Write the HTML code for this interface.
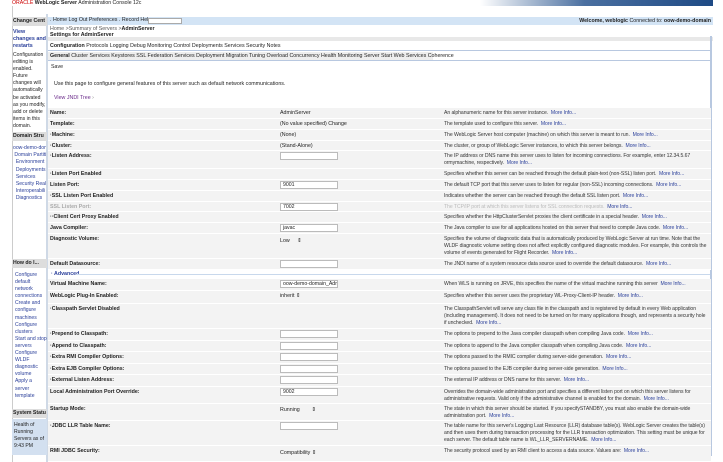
<!DOCTYPE html>
<html><head><meta charset="utf-8"><style>
*{margin:0;padding:0;box-sizing:border-box}
body{width:723px;height:462px;overflow:hidden;background:#fff;font-family:"Liberation Sans",sans-serif;font-size:5.3px;color:#222;position:relative}
.a{position:absolute}
.b{font-weight:bold}
.lk{color:#2a3f9a}
.row{position:absolute;left:48px;width:663px;background:#f3f3f3;border-bottom:1px solid #fff}
.row .l{position:absolute;left:2px;top:2px;font-weight:bold;color:#222;white-space:nowrap}
.row .v{position:absolute;left:232px;top:2px;white-space:nowrap}
.row .d{position:absolute;left:396px;top:2px;width:265px;line-height:7.2px;color:#333;font-size:5.1px;letter-spacing:-0.05px}
.in{position:absolute;left:232px;top:1px;width:58px;height:8px;border:1px solid #bbb;background:#fff;font-size:5.2px;padding-left:2px;line-height:6px;white-space:nowrap;overflow:hidden}
.side{position:absolute;left:13px;width:34px;line-height:7.1px;font-size:5.1px}
.sh{position:absolute;left:12px;width:35px;background:#ddd;font-weight:bold;font-size:5.2px;padding-left:1px;height:9px;line-height:9px;overflow:hidden;white-space:nowrap}
</style></head><body>
<div class="a" style="left:480px;top:0;width:233px;height:6px;background:linear-gradient(90deg,#fff,#4a6fa0 45%,#1e4a85)"></div>
<div class="a" style="left:12px;top:0;font-size:5.2px;line-height:6px"><span style="color:#c00">ORACLE</span> <b>WebLogic Server</b> Administration Console 12c</div>
<div class="a" style="left:12px;top:6px;width:1px;height:456px;background:#ccc"></div>
<div class="a" style="left:46px;top:14px;width:2px;height:448px;background:#cfd9e6"></div>
<div class="a" style="left:48px;top:17px;width:665px;height:8px;background:#d3e4f5"></div>
<div class="a" style="left:50px;top:17px;line-height:7px">. Home Log Out Preferences . Record Help</div>
<div class="a" style="left:148px;top:18px;width:34px;height:6px;background:#fff;border:1px solid #aaa"></div>
<div class="a" style="right:12px;top:18px;line-height:6px"><b>Welcome, weblogic</b> Connected to: <b>oow-demo-domain</b></div>
<div class="a" style="left:50px;top:26px;line-height:6px;color:#555">Home &gt;Summary of Servers &gt;<b style="color:#222">AdminServer</b></div>
<div class="a b" style="left:50px;top:32px;line-height:6px">Settings for AdminServer</div>
<div class="a" style="left:48px;top:37px;width:665px;height:4px;background:#e8e8e8"></div>
<div class="a" style="left:710px;top:36px;width:2px;height:420px;background:#b8c8e0"></div>
<div class="a" style="left:48px;top:42px;width:662px;height:9px;border-bottom:1px solid #b8c8e0;line-height:9px;padding-left:2px;white-space:nowrap"><b>Configuration</b> Protocols Logging Debug Monitoring Control Deployments Services Security Notes</div>
<div class="a" style="left:48px;top:52px;width:662px;height:9px;border-bottom:1px solid #b8c8e0;line-height:9px;padding-left:2px;white-space:nowrap;background:linear-gradient(90deg,#eee 0,#eee 385px,#fff 385px)"><b>General</b> Cluster Services Keystores SSL Federation Services Deployment Migration Tuning Overload Concurrency Health Monitoring Server Start Web Services Coherence</div>
<div class="a" style="left:51px;top:64px">Save</div>
<div class="a" style="left:54px;top:81px">Use this page to configure general features of this server such as default network communications.</div>
<div class="a" style="left:54px;top:95px;color:#6a2a8a">View JNDI Tree <span style="color:#888">›</span></div>

<div class="row" style="top:108px;height:11px"><span class="l">Name:</span><span class="v">AdminServer</span><span class="d">An alphanumeric name for this server instance. &nbsp;<span class="lk">More Info...</span></span></div>
<div class="row" style="top:119px;height:11px"><span class="l">Template:</span><span class="v">(No value specified) Change</span><span class="d">The template used to configure this server. &nbsp;<span class="lk">More Info...</span></span></div>
<div class="row" style="top:130px;height:11px"><span class="l">·Machine:</span><span class="v">(None)</span><span class="d">The WebLogic Server host computer (machine) on which this server is meant to run. &nbsp;<span class="lk">More Info...</span></span></div>
<div class="row" style="top:141px;height:10px"><span class="l">·Cluster:</span><span class="v">(Stand-Alone)</span><span class="d">The cluster, or group of WebLogic Server instances, to which this server belongs. &nbsp;<span class="lk">More Info...</span></span></div>
<div class="row" style="top:151px;height:18px"><span class="l">·Listen Address:</span><span class="in"></span><span class="d">The IP address or DNS name this server uses to listen for incoming connections. For example, enter 12.34.5.67 ormymachine, respectively. &nbsp;<span class="lk">More Info...</span></span></div>
<div class="row" style="top:169px;height:11px"><span class="l">·Listen Port Enabled</span><span class="d">Specifies whether this server can be reached through the default plain-text (non-SSL) listen port. &nbsp;<span class="lk">More Info...</span></span></div>
<div class="row" style="top:180px;height:11px"><span class="l">Listen Port:</span><span class="in">9001</span><span class="d">The default TCP port that this server uses to listen for regular (non-SSL) incoming connections. &nbsp;<span class="lk">More Info...</span></span></div>
<div class="row" style="top:191px;height:11px"><span class="l">·SSL Listen Port Enabled</span><span class="d">Indicates whether the server can be reached through the default SSL listen port. &nbsp;<span class="lk">More Info...</span></span></div>
<div class="row" style="top:202px;height:10px"><span class="l" style="color:#aaa">SSL Listen Port:</span><span class="in">7002</span><span class="d" style="color:#bbb">The TCP/IP port at which this server listens for SSL connection requests. &nbsp;<span class="lk">More Info...</span></span></div>
<div class="row" style="top:212px;height:11px"><span class="l">··Client Cert Proxy Enabled</span><span class="d">Specifies whether the HttpClusterServlet proxies the client certificate in a special header. &nbsp;<span class="lk">More Info...</span></span></div>
<div class="row" style="top:223px;height:11px"><span class="l">Java Compiler:</span><span class="in">javac</span><span class="d">The Java compiler to use for all applications hosted on this server that need to compile Java code. &nbsp;<span class="lk">More Info...</span></span></div>
<div class="row" style="top:234px;height:25px"><span class="l">Diagnostic Volume:</span><span class="v" style="top:4px">Low &nbsp;&nbsp;&nbsp; ⇕</span><span class="d">Specifies the volume of diagnostic data that is automatically produced by WebLogic Server at run time. Note that the WLDF diagnostic volume setting does not affect explicitly configured diagnostic modules. For example, this controls the volume of events generated for Flight Recorder. &nbsp;<span class="lk">More Info...</span></span></div>
<div class="row" style="top:259px;height:11px"><span class="l">Default Datasource:</span><span class="in"></span><span class="d">The JNDI name of a system resource data source used to override the default datasource. &nbsp;<span class="lk">More Info...</span></span></div>
<div class="a" style="left:48px;top:270px;width:662px;height:9px;background:#fff"><span class="a b lk" style="left:3px;top:1px">· Advanced</span><div class="a" style="left:28px;top:4px;width:634px;height:1px;background:#c8d8ec"></div></div>
<div class="row" style="top:279px;height:12px"><span class="l">Virtual Machine Name:</span><span class="in">oow-demo-domain_Adm</span><span class="d">When WLS is running on JRVE, this specifies the name of the virtual machine running this server &nbsp;<span class="lk">More Info...</span></span></div>
<div class="row" style="top:291px;height:13px"><span class="l">WebLogic Plug-In Enabled:</span><span class="v">inherit ⇕</span><span class="d">Specifies whether this server uses the proprietary WL-Proxy-Client-IP header. &nbsp;<span class="lk">More Info...</span></span></div>
<div class="row" style="top:304px;height:25px"><span class="l">·Classpath Servlet Disabled</span><span class="d">The ClasspathServlet will serve any class file in the classpath and is registered by default in every Web application (including management). It does not need to be turned on for many applications though, and represents a security hole if unchecked. &nbsp;<span class="lk">More Info...</span></span></div>
<div class="row" style="top:329px;height:12px"><span class="l">·Prepend to Classpath:</span><span class="in"></span><span class="d">The options to prepend to the Java compiler classpath when compiling Java code. &nbsp;<span class="lk">More Info...</span></span></div>
<div class="row" style="top:341px;height:11px"><span class="l">·Append to Classpath:</span><span class="in"></span><span class="d">The options to append to the Java compiler classpath when compiling Java code. &nbsp;<span class="lk">More Info...</span></span></div>
<div class="row" style="top:352px;height:12px"><span class="l">·Extra RMI Compiler Options:</span><span class="in"></span><span class="d">The options passed to the RMIC compiler during server-side generation. &nbsp;<span class="lk">More Info...</span></span></div>
<div class="row" style="top:364px;height:11px"><span class="l">·Extra EJB Compiler Options:</span><span class="in"></span><span class="d">The options passed to the EJB compiler during server-side generation. &nbsp;<span class="lk">More Info...</span></span></div>
<div class="row" style="top:375px;height:12px"><span class="l">·External Listen Address:</span><span class="in"></span><span class="d">The external IP address or DNS name for this server. &nbsp;<span class="lk">More Info...</span></span></div>
<div class="row" style="top:387px;height:17px"><span class="l">Local Administration Port Override:</span><span class="in">9002</span><span class="d">Overrides the domain-wide administration port and specifies a different listen port on which this server listens for administrative requests. Valid only if the administrative channel is enabled for the domain. &nbsp;<span class="lk">More Info...</span></span></div>
<div class="row" style="top:404px;height:17px"><span class="l">Startup Mode:</span><span class="v" style="top:3px">Running &nbsp;&nbsp;&nbsp;&nbsp;&nbsp;&nbsp; ⇕</span><span class="d">The state in which this server should be started. If you specifySTANDBY, you must also enable the domain-wide administration port. &nbsp;<span class="lk">More Info...</span></span></div>
<div class="row" style="top:421px;height:25px"><span class="l">·JDBC LLR Table Name:</span><span class="in"></span><span class="d">The table name for this server's Logging Last Resource (LLR) database table(s). WebLogic Server creates the table(s) and then uses them during transaction processing for the LLR transaction optimization. This setting must be unique for each server. The default table name is WL_LLR_SERVERNAME. &nbsp;<span class="lk">More Info...</span></span></div>
<div class="row" style="top:446px;height:16px"><span class="l">RMI JDBC Security:</span><span class="v" style="top:4px">Compatibility ⇕</span><span class="d">The security protocol used by an RMI client to access a data source. Values are: &nbsp;<span class="lk">More Info...</span></span></div>

<div class="sh" style="top:17px">Change Cent</div>
<div class="side b lk" style="top:29px;font-size:5.4px">View changes and restarts</div>
<div class="side" style="top:52px">Configuration editing is enabled. Future changes will automatically be activated as you modify, add or delete items in this domain.</div>
<div class="sh" style="top:132px">Domain Stru</div>
<div class="side lk" style="top:145px;white-space:nowrap;overflow:hidden;width:33px;line-height:7.2px">oow-demo-dom<br>&nbsp;Domain Partiti<br>&nbsp;&nbsp;Environment<br>&nbsp;&nbsp;Deployments<br>&nbsp;&nbsp;Services<br>&nbsp;&nbsp;Security Realm<br>&nbsp;&nbsp;Interoperabili<br>&nbsp;&nbsp;Diagnostics</div>
<div class="sh" style="top:259px">How do I...</div>
<div class="side lk" style="top:272px;left:15px;width:32px">Configure default network connections<br>Create and configure machines<br>Configure clusters<br>Start and stop servers<br>Configure WLDF diagnostic volume<br>Apply a server template</div>
<div class="sh" style="top:409px">System Statu</div>
<div class="a" style="left:12px;top:419px;width:35px;height:36px;background:#d3e0f0"></div>
<div class="side" style="top:422px;left:14px">Health of Running Servers as of 9:43 PM</div>
</body></html>
